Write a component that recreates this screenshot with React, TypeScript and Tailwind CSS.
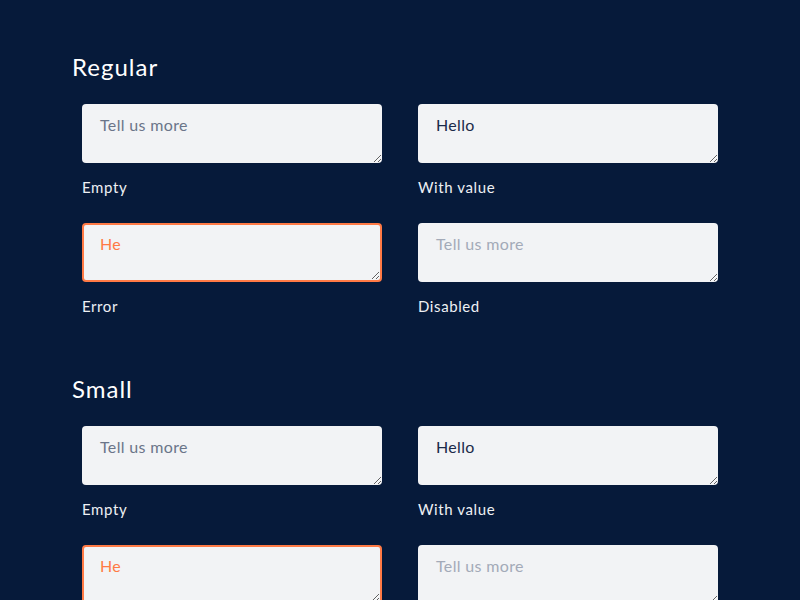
import React from "react";

type Variant = "empty" | "value" | "error" | "disabled";

function Field({ variant, label }: { variant: Variant; label: string }) {
  const base =
    "block w-[300px] h-[59px] rounded-[4px] bg-[#f2f3f5] text-[16px] leading-[24px] tracking-[0.35px] outline-none resize-y";
  let cls = base + " border-0 px-[18px] py-[9px] text-[#1b2a4a] placeholder:text-[#6b7589]";
  if (variant === "error")
    cls = base + " border-2 border-[#ff7a45] px-[16px] py-[7px] text-[#ff7a45] placeholder:text-[#6b7589]";
  if (variant === "disabled")
    cls = base + " border-0 px-[18px] py-[9px] placeholder:text-[#a3aab8] text-[#a3aab8]";
  return (
    <div className="flex flex-col">
      <textarea
        className={cls}
        placeholder="Tell us more"
        defaultValue={variant === "value" ? "Hello" : variant === "error" ? "He" : ""}
        disabled={variant === "disabled"}
        readOnly
      />
      <div className="mt-[14px] text-[15px] leading-[20px] tracking-[0.6px] text-[#eef0f4]">{label}</div>
    </div>
  );
}

function Section({ title }: { title: string }) {
  return (
    <div>
      <h2 className="text-[24px] leading-[32px] tracking-[1px] text-white">{title}</h2>
      <div className="ml-[10px] mt-[21px] grid grid-cols-[300px_300px] gap-x-[36px] gap-y-[26px]">
        <Field variant="empty" label="Empty" />
        <Field variant="value" label="With value" />
        <Field variant="error" label="Error" />
        <Field variant="disabled" label="Disabled" />
      </div>
    </div>
  );
}

export default function App() {
  return (
    <div
      className="h-[600px] overflow-hidden w-[800px] bg-[#061a3a] pl-[72px] pt-[51px] flex flex-col gap-[57px]"
      style={{ fontFamily: "Lato, 'Open Sans', sans-serif" }}
    >
      <Section title="Regular" />
      <Section title="Small" />
    </div>
  );
}
